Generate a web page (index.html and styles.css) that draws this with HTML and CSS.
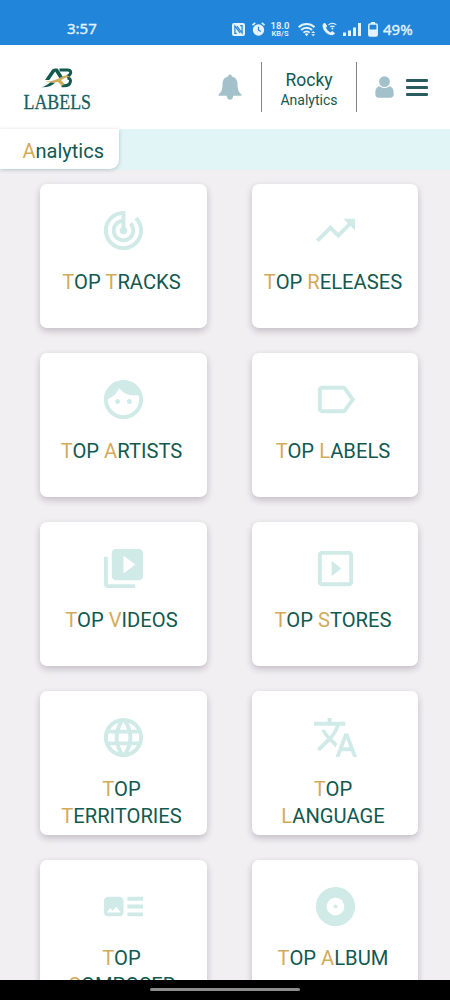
FILE: index.html
```
<!DOCTYPE html>
<html lang="en">
<head>
<meta charset="utf-8">
<meta name="viewport" content="width=device-width, initial-scale=1">
<title>Analytics</title>
<link rel="stylesheet" href="styles.css">
</head>
<body>
<div class="screen">
  <div class="status">
    <span class="clock">3:57</span>
    <div class="indicators">
      <svg class="nfc" width="13" height="13" viewBox="0 0 13 13"><rect width="13" height="13" rx="2" fill="#e4f2fb"/><path d="M4.800 10.300H2.900V3l5.200 6.900M8.200 2.700h1.900V10L4.900 3.100" fill="none" stroke="#2185da" stroke-width="1.200"/></svg>
      <svg class="alarm" width="13" height="14" viewBox="0 0 13 14"><circle cx="6.500" cy="8" r="5.700" fill="#e4f2fb"/><path d="M.5 3.200 3.200.8M12.500 3.200 9.800.8" stroke="#e4f2fb" stroke-width="1.600"/><path d="M6.500 4.800V8l2.200 1.400" fill="none" stroke="#2185da" stroke-width="1.200"/></svg>
      <span class="speed"><b>18.0</b><b class="unit">KB/S</b></span>
      <svg class="wifi" width="19" height="15" viewBox="0 0 19 15"><g fill="none" stroke="#e4f2fb" stroke-width="1.900"><path d="M.7 5.200a11.300 11.300 0 0 1 15.800 0M3.100 8a7.800 7.800 0 0 1 11 0M5.500 10.600a4.500 4.500 0 0 1 6.200 0"/></g><path d="M6.700 12.100a2.700 2.700 0 0 1 3.800 0l-1.900 2.200zM13.200 10.900 15.200 8.900l2 2zM13.200 12.200h4l-2 2z" fill="#e4f2fb"/></svg>
      <svg class="call" width="15" height="14" viewBox="0 0 15 14"><path d="M1.800 1.200.6 2.800c-.5 5 4.200 10.400 9.800 10.500l2.200-1.200c.4-.3.4-.7.1-1l-2.100-1.800c-.3-.3-.7-.2-1 .1l-.9 1C6.400 9.600 4.800 7.900 4 5.600l1-1c.3-.3.3-.6.1-.9L3.200 1.300c-.4-.5-1-.5-1.400-.1z" fill="#e4f2fb"/><path d="M6.500 2.900a6 6 0 0 1 7.800 0M8.200 4.900a3.500 3.500 0 0 1 4.400 0" fill="none" stroke="#e4f2fb" stroke-width="1.200"/><circle cx="10.400" cy="6.500" r="1" fill="#e4f2fb"/></svg>
      <svg class="signal" width="18" height="13" viewBox="0 0 18 13"><path d="M0 9.500h3V13H0zM5 7.500h3V13H5zM10 4.500h3V13h-3zM15 0h3v13h-3z" fill="#e4f2fb"/></svg>
      <svg class="battery" width="10" height="15" viewBox="0 0 10 15"><path d="M3 0h4v2H3z" fill="#e4f2fb"/><rect x=".8" y="2.100" width="8.400" height="12" rx="1.300" fill="none" stroke="#e4f2fb" stroke-width="1.500"/><path d="M1 7.500h8V14H1z" fill="#e4f2fb"/></svg>
      <span class="percent">49%</span>
    </div>
  </div>

  <header class="header">
    <svg class="logo" width="72" height="46" viewBox="0 0 72 46" role="img" aria-label="AB Labels">
      <path d="M22 13 28.500 3.400Q29.700 1.600 32 1.600h2.600L40 10l-3.200 1.800-4.600-7.200-6 8.400z" fill="#12594f"/>
      <path d="M36.500 3h8.200c3.200 0 3.700 2.200 2.300 4.300-.8 1.200-2 2-3.200 2.400M44.500 11c2.800.4 3.400 2.200 2.800 4-.8 2.600-3 3.800-5.800 3.800h-3" fill="none" stroke="#12594f" stroke-width="3"/>
      <path d="M22 14.500c7 .2 12.500-2 17.300-5 2.700-1.400 5.700-1.200 7.200.2-5.500.8-8 3.600-11.500 5-4 1.600-9 1-13-.2z" fill="#d0ac5c"/>
      <path d="M34 14l3-2 4.500 4.700-2.500 2.200z" fill="#d0ac5c"/>
      <path d="M18.500 20.300c3.700-1.200 6-2.900 8.700-4.900l4.800.3c-3.200 3.200-8 5-13.500 4.600z" fill="#12594f"/>
      <text class="wordmark" x="0.500" y="42" textLength="67.500" lengthAdjust="spacingAndGlyphs">LABELS</text>
    </svg>
    <div class="tools">
      <svg class="bell" width="24" height="27" viewBox="0 0 24 27"><path d="M12 .5c1.200 0 1.900.8 1.900 2 3.700.8 5.600 3.700 5.600 7.500 0 5.500 1 8 4 10.500v1.200H.5v-1.200c3-2.500 4-5 4-10.500 0-3.800 1.900-6.700 5.600-7.500 0-1.200.7-2 1.900-2zM8.800 21.500h6.400c0 5.600-6.400 5.600-6.400 0z" fill="#a2c1ca"/></svg>
      <div class="account"><span class="name">Rocky</span><span class="section">Analytics</span></div>
      <svg class="user" width="19" height="22" viewBox="0 0 19 22"><circle cx="9.500" cy="5.600" r="5.400" fill="#a2c1ca"/><path d="M4.500 10.300c3 2.400 7 2.400 10 0 3.200.7 4.200 3.300 4.200 7.700 0 2.500-1.200 3.800-3.400 3.800H3.700C1.500 21.800.3 20.500.3 18c0-4.400 1-7 4.200-7.700z" fill="#a2c1ca"/></svg>
      <div class="menu"><i></i><i></i><i></i></div>
    </div>
  </header>

  <div class="crumb"><h1 class="tab"><em>A</em>nalytics</h1></div>

  <main class="grid">
    <section class="card">
      <svg class="icon" viewBox="0 0 24 24"><path d="M19.070 4.930l-1.410 1.410C19.100 7.790 20 9.790 20 12c0 4.420-3.580 8-8 8s-8-3.580-8-8c0-4.080 3.050-7.440 7-7.930v2.020C8.160 6.570 6 9.030 6 12c0 3.310 2.690 6 6 6s6-2.690 6-6c0-1.660-.67-3.160-1.760-4.240l-1.410 1.410C15.550 9.900 16 10.900 16 12c0 2.210-1.790 4-4 4s-4-1.790-4-4c0-1.860 1.280-3.410 3-3.860v2.140c-.6.35-1 .98-1 1.720 0 1.100.9 2 2 2s2-.9 2-2c0-.74-.4-1.380-1-1.720V2h-1C6.480 2 2 6.480 2 12s4.480 10 10 10 10-4.480 10-10c0-2.760-1.120-5.260-2.930-7.070z"/></svg>
      <h2><em>T</em>OP <em>T</em>RACKS</h2>
    </section>
    <section class="card">
      <svg class="icon" viewBox="0 0 24 24"><path d="M16 6l2.290 2.290-4.880 4.880-4-4L2 16.590 3.410 18l6-6 4 4 6.300-6.290L22 12V6z"/></svg>
      <h2><em>T</em>OP <em>R</em>ELEASES</h2>
    </section>
    <section class="card">
      <svg class="icon" viewBox="0 0 24 24"><path d="M10.250 13c0 .69-.56 1.250-1.250 1.250S7.750 13.690 7.750 13s.56-1.250 1.250-1.250 1.250.56 1.250 1.250zM15 11.750c-.69 0-1.250.56-1.250 1.250s.56 1.250 1.250 1.250 1.250-.56 1.250-1.250-.56-1.250-1.250-1.250zm7 .25c0 5.520-4.480 10-10 10S2 17.520 2 12 6.480 2 12 2s10 4.480 10 10zm-2 0c0-.78-.12-1.530-.33-2.240-.7.15-1.420.24-2.170.24-3.130 0-5.920-1.440-7.760-3.690C8.690 8.870 6.600 10.880 4 11.860c.01.04 0 .09 0 .14 0 4.410 3.590 8 8 8s8-3.590 8-8z"/></svg>
      <h2><em>T</em>OP <em>A</em>RTISTS</h2>
    </section>
    <section class="card">
      <svg class="icon" viewBox="0 0 24 24"><path d="M17.630 5.840C17.270 5.330 16.670 5 16 5L5 5.010C3.900 5.010 3 5.900 3 7v10c0 1.100.9 1.990 2 1.990L16 19c.67 0 1.270-.33 1.630-.84L22 12l-4.370-6.160zM16 17H5V7h11l3.550 5L16 17z"/></svg>
      <h2><em>T</em>OP <em>L</em>ABELS</h2>
    </section>
    <section class="card">
      <svg class="icon" viewBox="0 0 24 24"><path d="M4 6H2v14c0 1.100.9 2 2 2h14v-2H4V6zm16-4H8c-1.100 0-2 .9-2 2v12c0 1.100.9 2 2 2h12c1.100 0 2-.9 2-2V4c0-1.100-.9-2-2-2zm-8 12.500v-9l6 4.500-6 4.500z"/></svg>
      <h2><em>T</em>OP <em>V</em>IDEOS</h2>
    </section>
    <section class="card">
      <svg class="icon" viewBox="0 0 24 24"><path d="M10 8v8l5-4-5-4zm9-5H5c-1.100 0-2 .9-2 2v14c0 1.100.9 2 2 2h14c1.100 0 2-.9 2-2V5c0-1.100-.9-2-2-2zm0 16H5V5h14v14z"/></svg>
      <h2><em>T</em>OP <em>S</em>TORES</h2>
    </section>
    <section class="card">
      <svg class="icon" viewBox="0 0 24 24"><path d="M11.990 2C6.470 2 2 6.480 2 12s4.470 10 9.990 10C17.520 22 22 17.520 22 12S17.520 2 11.990 2zm6.930 6h-2.950c-.32-1.250-.78-2.450-1.380-3.560 1.840.63 3.370 1.910 4.330 3.560zM12 4.040c.83 1.200 1.480 2.530 1.910 3.960h-3.820c.43-1.430 1.080-2.760 1.910-3.960zM4.260 14C4.100 13.360 4 12.690 4 12s.1-1.360.26-2h3.380c-.08.66-.14 1.320-.14 2 0 .68.06 1.340.14 2H4.260zm.82 2h2.950c.32 1.250.78 2.450 1.380 3.560-1.840-.63-3.370-1.900-4.330-3.560zm2.950-8H5.080c.96-1.660 2.490-2.930 4.330-3.560C8.810 5.550 8.350 6.750 8.030 8zM12 19.960c-.83-1.200-1.480-2.530-1.910-3.960h3.820c-.43 1.430-1.080 2.760-1.910 3.960zM14.340 14H9.660c-.09-.66-.16-1.320-.16-2 0-.68.07-1.350.16-2h4.680c.09.65.16 1.320.16 2 0 .68-.07 1.340-.16 2zm.25 5.560c.6-1.110 1.060-2.310 1.380-3.560h2.950c-.96 1.650-2.490 2.930-4.330 3.560zM16.360 14c.08-.66.14-1.320.14-2 0-.68-.06-1.340-.14-2h3.380c.16.64.26 1.310.26 2s-.1 1.360-.26 2h-3.380z"/></svg>
      <h2><em>T</em>OP <em>T</em>ERRITORIES</h2>
    </section>
    <section class="card">
      <svg class="icon" viewBox="0 0 24 24"><path d="M12.870 15.070l-2.540-2.510.03-.03c1.740-1.940 2.980-4.170 3.710-6.530H17V4h-7V2H8v2H1v1.990h11.170C11.500 7.920 10.440 9.750 9 11.350 8.070 10.320 7.300 9.190 6.690 8h-2c.73 1.630 1.730 3.170 2.980 4.560l-5.090 5.020L4 19l5-5 3.110 3.110.76-2.040zM18.500 10h-2L12 22h2l1.120-3h4.750L21 22h2l-4.500-12zm-2.620 7l1.620-4.330L19.120 17h-3.240z"/></svg>
      <h2><em>T</em>OP <em>L</em>ANGUAGE</h2>
    </section>
    <section class="card">
      <svg class="icon" viewBox="0 0 24 24"><path d="M22 13h-8v-2h8v2zm0-6h-8v2h8V7zm-8 10h8v-2h-8v2zm-2-8v6c0 1.100-.9 2-2 2H4c-1.100 0-2-.9-2-2V9c0-1.100.9-2 2-2h6c1.100 0 2 .9 2 2zm-1.500 6l-2.250-3-1.750 2.260-1.250-1.510L3.500 15h7z"/></svg>
      <h2><em>T</em>OP <em>C</em>OMPOSER</h2>
    </section>
    <section class="card">
      <svg class="icon" viewBox="0 0 24 24"><path d="M12 2C6.480 2 2 6.480 2 12s4.480 10 10 10 10-4.480 10-10S17.520 2 12 2zm0 14.500c-2.490 0-4.500-2.010-4.500-4.500S9.510 7.500 12 7.500s4.500 2.010 4.500 4.500-2.010 4.500-4.500 4.500zm0-5.500c-.55 0-1 .45-1 1s.45 1 1 1 1-.45 1-1-.45-1-1-1z"/></svg>
      <h2><em>T</em>OP <em>A</em>LBUM</h2>
    </section>
  </main>

  <div class="navbar"><span class="handle"></span></div>
</div>
</body>
</html>
```
FILE: styles.css
```
* { box-sizing: border-box; }
body { margin: 0; font-family: Roboto, "Liberation Sans", sans-serif; }
h1, h2 { margin: 0; font-weight: 400; }
em { font-style: normal; color: #d2ab59; }
svg { display: block; flex: none; }

.screen {
  width: 450px;
  height: 1000px;
  display: flex;
  flex-direction: column;
  overflow: hidden;
  background: #f1eff2;
  color: #12594f;
}

.status {
  flex: none;
  height: 45px;
  padding: 12px 36px 0 67px;
  display: flex;
  justify-content: space-between;
  background: #2185da;
  color: #e4f2fb;
}
.clock, .percent {
  font: 400 15px/33px "Noto Sans", "Open Sans", sans-serif;
  -webkit-text-stroke: .35px #e4f2fb;
}
.indicators { display: flex; align-items: center; height: 34px; }
.alarm { margin-left: 7px; }
.speed {
  margin-left: 5px;
  width: 20px;
  display: flex;
  flex-direction: column;
  align-items: center;
  font: 9.500px/9px Roboto, sans-serif;
}
.speed b { font-weight: 600; }
.speed .unit { font-size: 7.500px; line-height: 7px; }
.wifi { margin-left: 8px; }
.call { margin-left: 5px; }
.signal { margin-left: 6px; }
.battery { margin-left: 7px; }
.percent { margin-left: 5px; width: 31px; white-space: nowrap; }

.header {
  flex: none;
  height: 84px;
  padding: 0 22px 0 23px;
  display: flex;
  justify-content: space-between;
  align-items: center;
  background: #fff;
}
.logo { margin-top: 6px; overflow: visible; }
.wordmark { font: 20.500px "Liberation Serif", serif; fill: #175d61; stroke: #175d61; stroke-width: .3px; }
.tools { display: flex; align-items: center; }
.account {
  width: 96px;
  height: 50px;
  margin: 0 18px 0 19px;
  border: solid #818586;
  border-width: 0 1px;
  display: flex;
  flex-direction: column;
  align-items: center;
  padding-top: 7px;
}
.name { font-size: 17.500px; line-height: 22px; }
.section { font-size: 14px; line-height: 18px; }
.menu { margin-left: 12px; width: 22px; display: grid; gap: 4px; }
.menu i { height: 3px; background: #285c5f; border-radius: 1px; }

.crumb { flex: none; height: 41px; background: #e1f4f6; }
.tab {
  width: 119px;
  height: 40px;
  padding-left: 22.500px;
  background: #fff;
  border-bottom-right-radius: 9px;
  box-shadow: 0 1px 4px rgba(0, 0, 0, .2);
  font-size: 20px;
  line-height: 44px;
}

.grid {
  flex: 1;
  min-height: 0;
  overflow: hidden;
  padding: 14px 32px 0 40px;
  display: grid;
  grid-template-columns: 167px 166px;
  grid-auto-rows: 144px;
  gap: 25px 45px;
}
.card {
  display: flex;
  flex-direction: column;
  align-items: center;
  padding: 23px 14px 0 10px;
  background: #fff;
  border-radius: 7px;
  box-shadow: 0 3px 7px rgba(45, 30, 50, .24);
}
.icon { width: 47px; height: 47px; margin-left: 4px; fill: #d0eae8; }
.card h2 {
  max-width: 142px;
  margin-top: 15px;
  font-size: 20.200px;
  line-height: 27px;
  text-align: center;
}

.navbar {
  flex: none;
  height: 20px;
  display: flex;
  justify-content: center;
  padding-top: 8px;
  background: #000;
}
.handle { width: 150px; height: 3px; border-radius: 2px; background: #8c8c8c; }
```
